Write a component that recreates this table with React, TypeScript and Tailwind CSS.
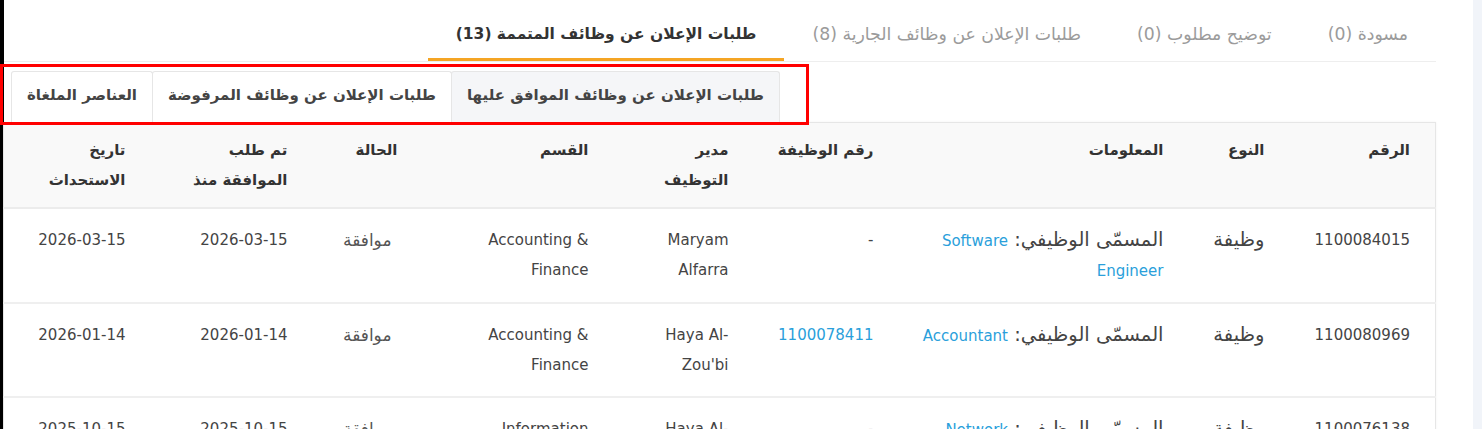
import React from "react";

type Row = {
  id: string;
  kind: string;
  title: string;
  jobNo: string;
  manager: string;
  dept: string;
  status: string;
  approvedAt: string;
  createdAt: string;
};

const rows: Row[] = [
  {
    id: "1100084015",
    kind: "وظيفة",
    title: "Software Engineer",
    jobNo: "-",
    manager: "Maryam Alfarra",
    dept: "Accounting & Finance",
    status: "موافقة",
    approvedAt: "2026-03-15",
    createdAt: "2026-03-15",
  },
  {
    id: "1100080969",
    kind: "وظيفة",
    title: "Accountant",
    jobNo: "1100078411",
    manager: "Haya Al-Zou'bi",
    dept: "Accounting & Finance",
    status: "موافقة",
    approvedAt: "2026-01-14",
    createdAt: "2026-01-14",
  },
  {
    id: "1100076138",
    kind: "وظيفة",
    title: "Network Engineer",
    jobNo: "-",
    manager: "Haya Al-Zou'bi",
    dept: "Information Technology",
    status: "موافقة",
    approvedAt: "2025-10-15",
    createdAt: "2025-10-15",
  },
];

const topTabs = [
  { label: "مسودة (0)", active: false },
  { label: "توضيح مطلوب (0)", active: false },
  { label: "طلبات الإعلان عن وظائف الجارية (8)", active: false },
  { label: "طلبات الإعلان عن وظائف المتممة (13)", active: true },
];

const subTabs = [
  { label: "طلبات الإعلان عن وظائف الموافق عليها", active: true },
  { label: "طلبات الإعلان عن وظائف المرفوضة", active: false },
  { label: "العناصر الملغاة", active: false },
];

const headers = [
  "الرقم",
  "النوع",
  "المعلومات",
  "رقم الوظيفة",
  "مدير التوظيف",
  "القسم",
  "الحالة",
  "تم طلب الموافقة منذ",
  "تاريخ الاستحداث",
];

const colWidths = ["w-[146px]", "w-[101px]", "w-[290px]", "w-[145px]", "w-[140px]", "w-[191px]", "w-[110px]", "w-[162px]", "w-[147px]"];

const cell = "pr-[25px] pl-[20px] py-[16px] align-top text-right";

export default function App() {
  return (
    <div className="relative flex w-[1482px] h-[429px] overflow-hidden bg-white font-['DejaVu_Sans',sans-serif] text-[15px] text-[#444]">
      <div className="w-[4px] shrink-0 bg-black" />

      <main dir="rtl" className="w-[1432px] shrink-0">
        {/* top tabs */}
        <nav className="flex border-b border-[#eeeeee]">
          {topTabs.map((t) => (
            <div
              key={t.label}
              className={`px-[28px] pt-[22px] pb-[12px] leading-[24px] whitespace-nowrap border-b-[3px] ${
                t.active ? "border-[#f5a524] font-bold text-[15.5px] text-[#333]" : "border-transparent text-[17.3px] text-[#9b9b9b]"
              }`}
            >
              {t.label}
            </div>
          ))}
        </nav>

        {/* sub tabs */}
        <div className="flex justify-end pl-[8px] pt-[9px]">
          {subTabs.map((t) => (
            <div
              key={t.label}
              className={`h-[51px] flex items-start pt-[11px] px-[15px] font-bold text-[15px] leading-[24px] text-[#444] border border-b-0 border-[#e6e6e6] rounded-t-[3px] -ml-px ${
                t.active ? "bg-[#f5f6f8]" : "bg-white"
              }`}
            >
              {t.label}
            </div>
          ))}
        </div>

        {/* table */}
        <table className="table-fixed w-full border-collapse border border-[#e6e6e6] shadow-[0_0_2px_rgba(0,0,0,0.06)]">
          <colgroup>
            {colWidths.map((w, i) => (
              <col key={i} className={w} />
            ))}
          </colgroup>
          <thead>
            <tr className="bg-[#f9f9f9] border-b-2 border-[#ececec]">
              {headers.map((h) => (
                <th key={h} className="pr-[25px] pl-[20px] py-[12px] align-top text-right font-bold leading-[30px] text-[#333]">
                  {h}
                </th>
              ))}
            </tr>
          </thead>
          <tbody className="leading-[30px]">
            {rows.map((r) => (
              <tr key={r.id} className="border-b-2 border-[#efefef]">
                <td className={cell}>{r.id}</td>
                <td className={cell}>
                  <span className="text-[19.5px]">{r.kind}</span>
                </td>
                <td className={cell}>
                  <span className="text-[19.5px]">المسمّى الوظيفي: </span>
                  <span className="text-[#2a9fdb]">{r.title}</span>
                </td>
                <td className={cell}>
                  {r.jobNo === "-" ? r.jobNo : <span className="text-[#2a9fdb]">{r.jobNo}</span>}
                </td>
                <td className={cell}>{r.manager}</td>
                <td className={cell}>{r.dept}</td>
                <td className={cell}>
                  <span className="pr-[6px] text-[17px] text-[#555]">{r.status}</span>
                </td>
                <td className={cell}>{r.approvedAt}</td>
                <td className={cell}>{r.createdAt}</td>
              </tr>
            ))}
          </tbody>
        </table>
      </main>

      <div className="w-[37px] shrink-0" />
      <div className="flex-1 bg-[#f1f4f9]" />

      {/* highlight box */}
      <div className="absolute left-0 top-[64px] w-[809px] h-[61px] border-[3px] border-[#ff0000] pointer-events-none" />
    </div>
  );
}
